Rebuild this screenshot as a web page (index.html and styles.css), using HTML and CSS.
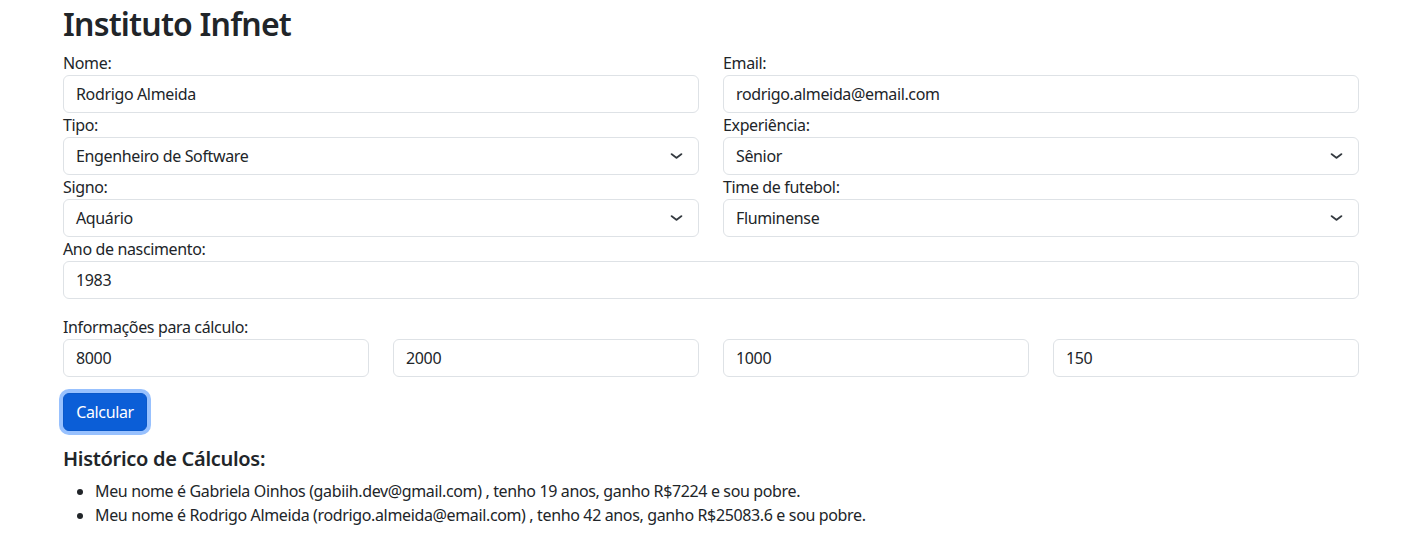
FILE: index.html
```html
<!DOCTYPE html>
<html lang="pt-BR">
<head>
<meta charset="utf-8">
<title>Instituto Infnet</title>
<link rel="stylesheet" href="styles.css">
</head>
<body>
<div class="container">
  <h1 class="title">Instituto Infnet</h1>
  <form class="form">
    <div class="row two">
      <div class="field">
        <label class="label">Nome:</label>
        <input class="control" type="text" value="Rodrigo Almeida">
      </div>
      <div class="field">
        <label class="label">Email:</label>
        <input class="control" type="text" value="rodrigo.almeida@email.com">
      </div>
    </div>
    <div class="row two">
      <div class="field">
        <label class="label">Tipo:</label>
        <div class="select"><span>Engenheiro de Software</span><svg class="chev" viewBox="0 0 16 16" width="13" height="10" preserveAspectRatio="none"><path d="m2 5 6 6 6-6" fill="none" stroke="#343a40" stroke-width="2.4" stroke-linecap="round" stroke-linejoin="round"/></svg></div>
      </div>
      <div class="field">
        <label class="label">Experiência:</label>
        <div class="select"><span>Sênior</span><svg class="chev" viewBox="0 0 16 16" width="13" height="10" preserveAspectRatio="none"><path d="m2 5 6 6 6-6" fill="none" stroke="#343a40" stroke-width="2.4" stroke-linecap="round" stroke-linejoin="round"/></svg></div>
      </div>
    </div>
    <div class="row two">
      <div class="field">
        <label class="label">Signo:</label>
        <div class="select"><span>Aquário</span><svg class="chev" viewBox="0 0 16 16" width="13" height="10" preserveAspectRatio="none"><path d="m2 5 6 6 6-6" fill="none" stroke="#343a40" stroke-width="2.4" stroke-linecap="round" stroke-linejoin="round"/></svg></div>
      </div>
      <div class="field">
        <label class="label">Time de futebol:</label>
        <div class="select"><span>Fluminense</span><svg class="chev" viewBox="0 0 16 16" width="13" height="10" preserveAspectRatio="none"><path d="m2 5 6 6 6-6" fill="none" stroke="#343a40" stroke-width="2.4" stroke-linecap="round" stroke-linejoin="round"/></svg></div>
      </div>
    </div>
    <div class="field">
      <label class="label">Ano de nascimento:</label>
      <input class="control" type="text" value="1983">
    </div>
    <div class="calc">
      <label class="label">Informações para cálculo:</label>
      <div class="row four">
        <input class="control" type="text" value="8000">
        <input class="control" type="text" value="2000">
        <input class="control" type="text" value="1000">
        <input class="control" type="text" value="150">
      </div>
    </div>
    <button class="btn" type="button">Calcular</button>
  </form>
  <h5 class="hist">Histórico de Cálculos:</h5>
  <ul class="list">
    <li>Meu nome é Gabriela Oinhos (gabiih.dev@gmail.com) , tenho 19 anos, ganho R$7224 e sou pobre.</li>
    <li>Meu nome é Rodrigo Almeida (rodrigo.almeida@email.com) , tenho 42 anos, ganho R$25083.6 e sou pobre.</li>
  </ul>
</div>
</body>
</html>
```

FILE: styles.css
```css
* { box-sizing: border-box; }
html, body {
  margin: 0;
  background: #fff;
  color: #212529;
  font-family: "Noto Sans", "Open Sans", sans-serif;
  font-size: 16px;
  line-height: 1.5;
  letter-spacing: -0.36px;
}
.container {
  width: 1296px;
  margin: 0 0 0 63px;
}
.title {
  margin: 5px 0 8px;
  font-size: 32px;
  font-weight: 600;
  line-height: 38px;
  letter-spacing: -0.8px;
}
.form { display: flex; flex-direction: column; }
.row { display: grid; column-gap: 24px; }
.row.two { grid-template-columns: 1fr 1fr; }
.row.four { grid-template-columns: repeat(4, 1fr); }
.field { display: flex; flex-direction: column; }
.label { display: block; height: 24px; }
.control, .select {
  display: block;
  width: 100%;
  height: 38px;
  padding: 6px 12px;
  font: inherit;
  letter-spacing: inherit;
  color: #212529;
  background: #fff;
  border: 1px solid #dee2e6;
  border-radius: 6px;
  outline: none;
}
.select {
  display: flex;
  align-items: center;
  justify-content: space-between;
  padding-right: 15px;
}
.chev { display: block; }
.calc { margin-top: 16px; }
.btn {
  align-self: flex-start;
  margin-top: 16px;
  height: 38px;
  width: 84px;
  padding: 6px 0;
  font: inherit;
  letter-spacing: inherit;
  color: #fff;
  background: #0b5ed7;
  border: 1px solid #0a58ca;
  border-radius: 6px;
  box-shadow: 0 0 0 4px #98c1fe;
}
.hist {
  margin: 16px 0 8px;
  font-size: 20px;
  font-weight: 600;
  line-height: 24px;
  letter-spacing: -0.3px;
}
.list {
  margin: 0;
  padding-left: 32px;
}
```
